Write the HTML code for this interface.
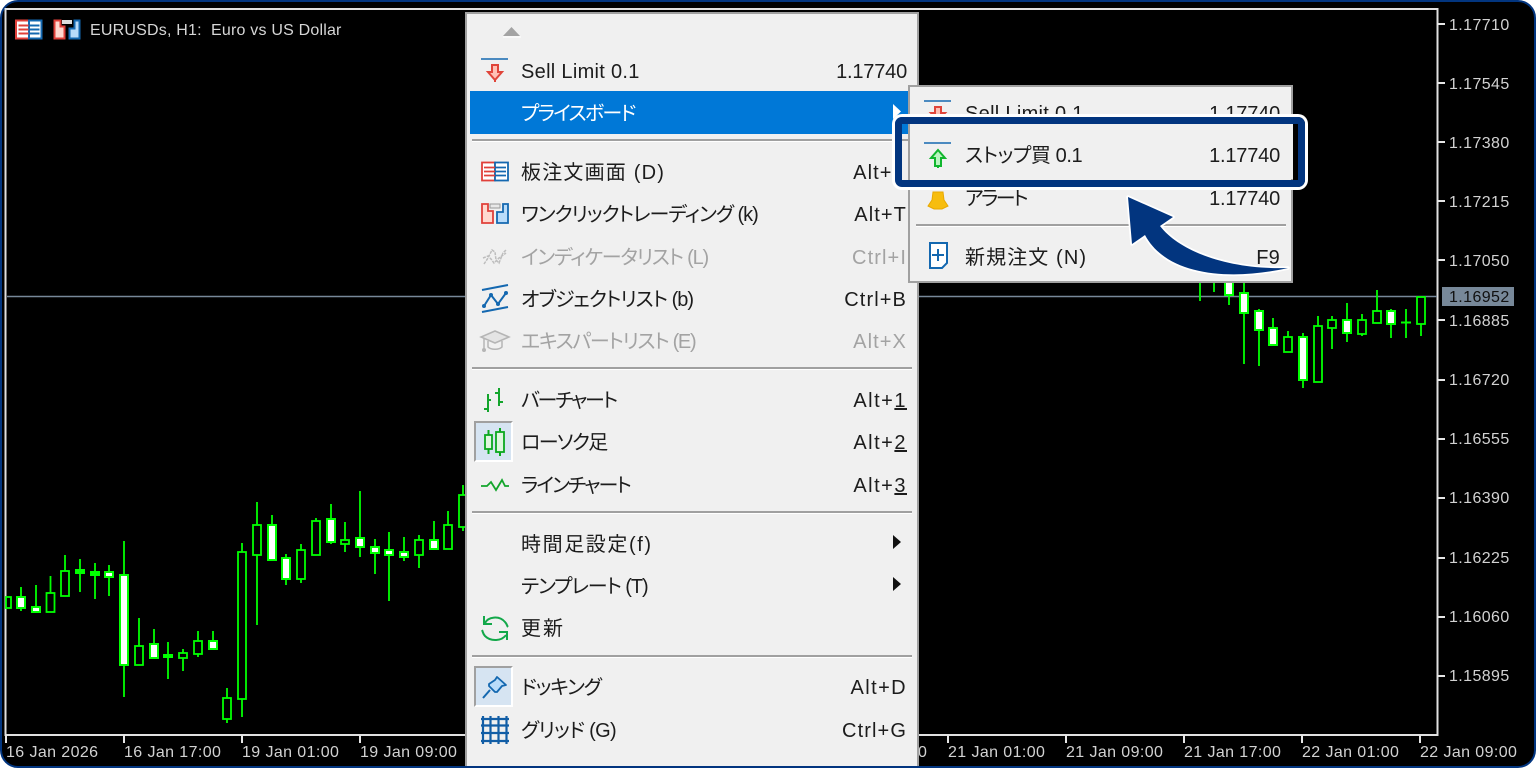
<!DOCTYPE html>
<html><head><meta charset="utf-8">
<style>
html,body{margin:0;padding:0;background:#fff}
#p{position:relative;width:1536px;height:768px;overflow:hidden;background:#fff;font-family:"Liberation Sans","Noto Sans CJK JP",sans-serif}
#f{position:absolute;left:0;top:0;width:1532px;height:764px;border:2px solid #02357f;border-radius:18px;background:#000;overflow:hidden}
svg{position:absolute;left:0;top:0}
.a{position:absolute;color:#d2d2d2;font-size:16px;line-height:20px;white-space:pre;letter-spacing:.4px;margin-top:1px}
#m,#s{position:absolute;background:#f0f0f0;box-sizing:border-box;border:2px solid #a0a0a0}
#m{left:465px;top:12px;width:454px;height:754px;border-bottom:none}
#s{left:908px;top:85px;width:385px;height:198px}
.t,.r{position:absolute;height:30px;line-height:30px;font-size:20px;color:#1c1c1c;white-space:pre;font-feature-settings:"palt";margin-top:1px}
.t{left:521px}
.r{text-align:right;letter-spacing:1.1px}
.n{letter-spacing:-.2px}
.g{color:#a3a3a3}
.sp{position:absolute;height:2px;background:#a0a0a0;border-bottom:1px solid #fff}
.hl{position:absolute;left:470px;top:91px;width:440px;height:43px;background:#0078d7}
.bx{position:absolute;left:474px;width:35px;height:37px;background:#d6e4f2;border:2px solid;border-color:#a0a0a0 #fff #fff #a0a0a0}
#b{position:absolute;left:895px;top:117px;width:410px;height:70px;box-sizing:border-box;border:7px solid #02357f;border-radius:7px;box-shadow:0 0 0 3px #fff}
</style></head><body>
<div id="p">
<div id="f"></div>
<svg width="1536" height="768" viewBox="0 0 1536 768">
<rect x="5.5" y="9" width="1432" height="726" fill="none" stroke="#e0e0e0" stroke-width="2"/>
<path d="M7 296.5H1437" stroke="#778899" stroke-width="1.6"/>
<rect x="1442" y="287" width="72" height="19" fill="#778899"/>
<g stroke="#e6e6e6" stroke-width="2">
<path d="M1437 24h8M1437 83h8M1437 142h8M1437 201h8M1437 260h8M1437 320h8M1437 380h8M1437 439h8M1437 498h8M1437 558h8M1437 617h8M1437 676h8"/>
<path d="M6 735v8M124 735v8M242 735v8M360 735v8M948 735v8M1066 735v8M1184 735v8M1302 735v8M1420 735v8"/>
</g>
<path stroke="#00ff00" stroke-width="1.8" fill="none" d="M21 587V611M36 585V612M50.5 576V612M65 555V596M80 559V592M95 563V599M109 565V596M124 541V697M139 618V665M154 629V658M168 642V679M183 649V671M198 631V657M213 631V649M227 688V723M242 543V717M257 502V625M272 515V560M286 554V585M301 544V583M316 518V555M331 504V544M345 522V552M360 491V557M375 539V574M389 532V601M404 537V561M419 535V568M434 521V549M448 511V549M463 485V531M1200 280V301M1214 280V292M1229 280V305M1244 280V364M1259 309V366M1273 318V345M1288 331V352M1303 333V388M1318 316V382M1332 316V349M1347 303V342M1362 314V336M1377 290V323M1391 309V338M1406 309V338M1421 297V336"/>
<g fill="#000" stroke="#00ff00" stroke-width="1.8">
<rect x="6" y="597" width="5" height="11"/><rect x="46.500" y="593" width="8" height="19"/><rect x="61" y="571" width="8" height="25"/><rect x="135" y="646" width="8" height="19"/><rect x="179" y="653" width="8" height="5"/><rect x="194" y="641" width="8" height="13"/><rect x="223" y="698" width="8" height="21"/><rect x="238" y="552" width="8" height="147"/><rect x="253" y="525" width="8" height="30"/><rect x="297" y="550" width="8" height="29"/><rect x="312" y="521" width="8" height="34"/><rect x="341" y="540" width="8" height="4"/><rect x="415" y="540" width="8" height="15"/><rect x="444" y="525" width="8" height="24"/><rect x="459" y="495" width="8" height="32"/><rect x="1284" y="337" width="8" height="15"/><rect x="1314" y="326" width="8" height="56"/><rect x="1328" y="320" width="8" height="8"/><rect x="1358" y="320" width="8" height="14"/><rect x="1373" y="311" width="8" height="12"/><rect x="1417" y="297" width="8" height="27"/>
</g>
<g fill="#fff" stroke="#00ff00" stroke-width="2">
<rect x="17" y="597" width="8" height="11"/><rect x="32" y="607" width="8" height="5"/><rect x="76" y="570" width="8" height="3" fill="#00ff00"/><rect x="91" y="572" width="8" height="3" fill="#00ff00"/><rect x="105" y="572" width="8" height="5"/><rect x="120" y="575" width="8" height="90"/><rect x="150" y="644" width="8" height="14"/><rect x="164" y="655" width="8" height="2" fill="#00ff00"/><rect x="209" y="641" width="8" height="8"/><rect x="268" y="525" width="8" height="35"/><rect x="282" y="558" width="8" height="21"/><rect x="327" y="519" width="8" height="23"/><rect x="356" y="538" width="8" height="9"/><rect x="371" y="547" width="8" height="6"/><rect x="385" y="550" width="8" height="5"/><rect x="400" y="552" width="8" height="5"/><rect x="430" y="540" width="8" height="9"/><rect x="1225" y="280" width="8" height="15"/><rect x="1240" y="293" width="8" height="20"/><rect x="1255" y="311" width="8" height="19"/><rect x="1269" y="328" width="8" height="17"/><rect x="1299" y="337" width="8" height="43"/><rect x="1343" y="320" width="8" height="13"/><rect x="1387" y="311" width="8" height="13"/>
</g>
<rect x="1401" y="321.500" width="10" height="2" fill="#00ff00"/>
<!-- title icons -->
<rect x="16" y="20.500" width="13" height="18" fill="#fff" stroke="#e0403a" stroke-width="2"/><rect x="29" y="20.500" width="12.500" height="18" fill="#fff" stroke="#1468b0" stroke-width="2"/>
<path d="M18.500 25.500h10M18.500 29.500h10M18.500 33.500h10" stroke="#e0403a" stroke-width="2"/><path d="M29.500 25.500h10M29.500 29.500h10M29.500 33.500h10" stroke="#1468b0" stroke-width="2"/>
<path d="M54.500 20.500h6v6h4v12h-10z" fill="#ffd8cf" stroke="#e0403a" stroke-width="2"/>
<path d="M79.500 20.500h-5v8h-5v10h10z" fill="#b9dcfa" stroke="#1468b0" stroke-width="2"/>
<rect x="62" y="20" width="10" height="4" fill="#ddd"/>
</svg>
<div class="a" style="left:90px;top:20px;color:#d6d6d6;letter-spacing:.2px">EURUSDs, H1:  Euro vs US Dollar</div>
<div class="a" style="left:1449px;top:15px">1.17710</div>
<div class="a" style="left:1449px;top:74px">1.17545</div>
<div class="a" style="left:1449px;top:133px">1.17380</div>
<div class="a" style="left:1449px;top:192px">1.17215</div>
<div class="a" style="left:1449px;top:251px">1.17050</div>
<div class="a" style="left:1449px;top:287px;color:#111">1.16952</div>
<div class="a" style="left:1449px;top:311px">1.16885</div>
<div class="a" style="left:1449px;top:370px">1.16720</div>
<div class="a" style="left:1449px;top:429px">1.16555</div>
<div class="a" style="left:1449px;top:488px">1.16390</div>
<div class="a" style="left:1449px;top:548px">1.16225</div>
<div class="a" style="left:1449px;top:607px">1.16060</div>
<div class="a" style="left:1449px;top:666px">1.15895</div>
<div class="a" style="left:6px;top:742px">16 Jan 2026</div>
<div class="a" style="left:124px;top:742px">16 Jan 17:00</div>
<div class="a" style="left:242px;top:742px">19 Jan 01:00</div>
<div class="a" style="left:360px;top:742px">19 Jan 09:00</div>
<div class="a" style="left:830px;top:742px">20 Jan 17:00</div>
<div class="a" style="left:948px;top:742px">21 Jan 01:00</div>
<div class="a" style="left:1066px;top:742px">21 Jan 09:00</div>
<div class="a" style="left:1184px;top:742px">21 Jan 17:00</div>
<div class="a" style="left:1302px;top:742px">22 Jan 01:00</div>
<div class="a" style="left:1420px;top:742px">22 Jan 09:00</div>

<div id="m"></div>
<div class="hl"></div>
<div class="sp" style="left:472px;top:139px;width:440px"></div>
<div class="sp" style="left:472px;top:367px;width:440px"></div>
<div class="sp" style="left:472px;top:511px;width:440px"></div>
<div class="sp" style="left:472px;top:655px;width:440px"></div>
<div class="bx" style="top:421px"></div>
<div class="bx" style="top:666px"></div>

<div class="t" style="top:56px;letter-spacing:.3px">Sell Limit 0.1</div><div class="r n" style="top:56px;right:629px">1.17740</div>
<div class="t" style="top:98px;color:#fff;letter-spacing:-1.7px">プライスボード</div>
<div class="t" style="top:157px;letter-spacing:1.2px">板注文画面 (D)</div><div class="r" style="top:157px;right:629px">Alt+B</div>
<div class="t" style="top:199px;letter-spacing:-1px">ワンクリックトレーディング (k)</div><div class="r" style="top:199px;right:629px">Alt+T</div>
<div class="t g" style="top:242px;letter-spacing:-1.2px">インディケータリスト (L)</div><div class="r g" style="top:242px;right:629px">Ctrl+I</div>
<div class="t" style="top:284px;letter-spacing:-1px">オブジェクトリスト (b)</div><div class="r" style="top:284px;right:629px">Ctrl+B</div>
<div class="t g" style="top:326px;letter-spacing:-1.3px">エキスパートリスト (E)</div><div class="r g" style="top:326px;right:629px">Alt+X</div>
<div class="t" style="top:385px;letter-spacing:-2.2px">バーチャート</div><div class="r" style="top:385px;right:629px;letter-spacing:1.5px">Alt+<u>1</u></div>
<div class="t" style="top:427px;letter-spacing:-1.6px">ローソク足</div><div class="r" style="top:427px;right:629px;letter-spacing:1.5px">Alt+<u>2</u></div>
<div class="t" style="top:470px;letter-spacing:-1.9px">ラインチャート</div><div class="r" style="top:470px;right:629px;letter-spacing:1.5px">Alt+<u>3</u></div>
<div class="t" style="top:529px;letter-spacing:1.6px">時間足設定(f)</div>
<div class="t" style="top:571px;letter-spacing:-1.1px">テンプレート (T)</div>
<div class="t" style="top:613px;letter-spacing:2px">更新</div>
<div class="t" style="top:672px;letter-spacing:-1.2px">ドッキング</div><div class="r" style="top:672px;right:629px;letter-spacing:1.4px">Alt+D</div>
<div class="t" style="top:715px;letter-spacing:-.7px">グリッド (G)</div><div class="r" style="top:715px;right:629px">Ctrl+G</div>

<svg width="1536" height="768" viewBox="0 0 1536 768" style="pointer-events:none">
<path d="M503 36l8.500-9 8.500 9z" fill="#a3a3a3"/><path d="M503 37h18" stroke="#fff"/>
<path d="M481 59h27" stroke="#1468b0" stroke-width="1.600"/>
<path d="M492 65h6v7h4l-7 8-7-8h4z" fill="#ffc0b5" stroke="#e0453a" stroke-width="2"/><path d="M495 80v2" stroke="#e0453a" stroke-width="2"/>
<path d="M893 104l8 7.500-8 7.500z" fill="#fff"/>
<path d="M893 535l8 7-8 7zM893 577l8 7-8 7z" fill="#111"/>
<!-- board -->
<rect x="482" y="162.500" width="13" height="18" fill="#fff" stroke="#e0403a" stroke-width="1.800"/><rect x="495" y="162.500" width="13" height="18" fill="#fff" stroke="#1468b0" stroke-width="1.800"/>
<path d="M484 167.500h11M484 171.500h11M484 175.500h11" stroke="#e0403a" stroke-width="1.800"/><path d="M495 167.500h11M495 171.500h11M495 175.500h11" stroke="#1468b0" stroke-width="1.800"/>
<!-- oneclick -->
<path d="M482 204h6v7h5v12h-11z" fill="#ffd8cf" stroke="#e0403a" stroke-width="1.800"/>
<path d="M508 204h-5v8h-6v11h11z" fill="#b9dcfa" stroke="#1468b0" stroke-width="1.800"/>
<rect x="490" y="204" width="10" height="4" fill="#e8e8e8" stroke="#999"/>
<!-- indicators -->
<path d="M484 264l4-6 4-8 3 2 1 8 3 3 4-10 3-3M483 258l5-2 3 3 3 4 5-5 7-5" fill="none" stroke="#bdbdbd" stroke-width="1.500" stroke-dasharray="3 1"/>
<!-- objects -->
<path d="M482 290l26-5M482 312l26-5" stroke="#1468b0" stroke-width="2"/>
<path d="M484 306l7-11 7 9 8-11" fill="none" stroke="#1468b0" stroke-width="2"/>
<circle cx="484" cy="306" r="2" fill="#1468b0"/><circle cx="491" cy="295" r="2" fill="#1468b0"/><circle cx="498" cy="304" r="2" fill="#1468b0"/><circle cx="506" cy="293" r="2" fill="#1468b0"/>
<!-- cap -->
<path d="M495 331l14 6-14 6-14-6z" fill="#e4e4e4" stroke="#b5b5b5" stroke-width="1.500"/>
<path d="M488 341v6c3 3 11 3 14 0v-6" fill="none" stroke="#b5b5b5" stroke-width="1.500"/><path d="M484 338v11" stroke="#b5b5b5" stroke-width="1.500"/><circle cx="484" cy="350" r="2" fill="#b5b5b5"/>
<!-- bars -->
<path d="M488 394v18M484 409h4M488 400h3M499 388v18M495 393h4M499 402h4" stroke="#13a52c" stroke-width="2" fill="none"/>
<!-- candles -->
<path d="M488.500 430v24M500 428v28" stroke="#0aa81e" stroke-width="2"/>
<rect x="485" y="435" width="7" height="14" fill="#dff7df" stroke="#0aa81e" stroke-width="1.800"/>
<rect x="496" y="432" width="8" height="20" fill="#dff7df" stroke="#0aa81e" stroke-width="1.800"/>
<!-- line -->
<path d="M481 486h6l4-4 5 8 6-10 3 6h4" fill="none" stroke="#13a52c" stroke-width="1.800"/>
<!-- refresh -->
<path d="M485 623c3-6 14-8 20-1 2 2 2 4 3 5M506 635c-4 6-15 7-21 1-2-2-2-4-3-6" fill="none" stroke="#13a84a" stroke-width="2"/>
<path d="M484 616v8h8M507 640v-8h-8" fill="none" stroke="#13a84a" stroke-width="2"/>
<!-- pin -->
<path d="M497 677l9 8-4 1-5 6-2 0-6-6 0-2 6-4z" fill="#b9dcfa" stroke="#1468b0" stroke-width="1.800" stroke-linejoin="round"/><path d="M483 698l7-8" stroke="#1468b0" stroke-width="2"/>
<!-- grid -->
<path d="M481 719h28M481 725.500h28M481 733h28M481 741h28M483 716v28M490.500 716v28M498.500 716v28M506.500 716v28" stroke="#125ea6" stroke-width="2.200"/>
</svg>

<div id="s"></div>
<div class="sp" style="left:916px;top:224px;width:370px"></div>
<div class="t" style="left:965px;top:98px;letter-spacing:.3px">Sell Limit 0.1</div><div class="r n" style="top:98px;right:256px">1.17740</div>
<div class="t" style="left:965px;top:183px;letter-spacing:-2.5px">アラート</div><div class="r n" style="top:183px;right:256px">1.17740</div>
<div class="t" style="left:965px;top:242px;letter-spacing:1.1px">新規注文 (N)</div><div class="r" style="top:242px;right:256px;letter-spacing:.2px">F9</div>
<svg width="1536" height="768" viewBox="0 0 1536 768">
<path d="M924 101h27" stroke="#1468b0" stroke-width="1.600"/>
<path d="M935 107h6v6h4l-7 7-7-7h4z" fill="#ffc0b5" stroke="#e0453a" stroke-width="2"/>
<path d="M933 192h10l1 8 4 6-6 3h-8l-6-3 4-6z" fill="#f7bd0e" stroke="#e8a800" stroke-width="1"/>
<path d="M930 243h17v20l-5 5h-12z" fill="#fff" stroke="#1468b0" stroke-width="2"/>
<path d="M938 249v12M932 255h12" stroke="#1468b0" stroke-width="2"/>
</svg>
<div id="b"></div>
<div style="position:absolute;left:902px;top:124px;width:396px;height:55px;overflow:hidden">
<div style="position:absolute;left:0;top:0;width:6px;height:10px;background:#0078d7"></div>
<div style="position:absolute;left:0;top:10px;width:7px;height:45px;background:#f0f0f0"></div>
<div style="position:absolute;left:7px;top:0;width:384px;height:55px;background:#f0f0f0"></div>
<div style="position:absolute;left:6px;top:0;width:2px;height:55px;background:#a0a0a0"></div>
<div style="position:absolute;left:391px;top:0;width:5px;height:55px;background:#000"></div>
<div style="position:absolute;left:0;top:15px;width:6px;height:2px;background:#a0a0a0"></div>
<div style="position:absolute;left:63px;top:17px;height:30px;line-height:30px;font-size:20px;color:#1c1c1c;white-space:pre;font-feature-settings:'palt';letter-spacing:-.4px">ストップ買 0.1</div>
<div style="position:absolute;right:18px;top:17px;height:30px;line-height:30px;font-size:20px;color:#1c1c1c;letter-spacing:-.2px">1.17740</div>
<svg width="60" height="55" viewBox="902 124 60 55"><path d="M924 143h27" stroke="#1468b0" stroke-width="1.600"/><path d="M935 166v-8h-4l7-8 7 8h-4v8z" fill="#baf5c0" stroke="#11b62e" stroke-width="2"/><path d="M938 166v2" stroke="#11b62e" stroke-width="2"/></svg>
</div>
<svg width="1536" height="768" viewBox="0 0 1536 768">
<path d="M1128 197L1173 217 1160 226C1180 252 1230 270 1288 268 1235 280 1168 278 1145 235L1132 244Z" fill="#02357f" stroke="#fff" stroke-width="3.500" paint-order="stroke" stroke-linejoin="round"/>
</svg>
</div>
</body></html>
